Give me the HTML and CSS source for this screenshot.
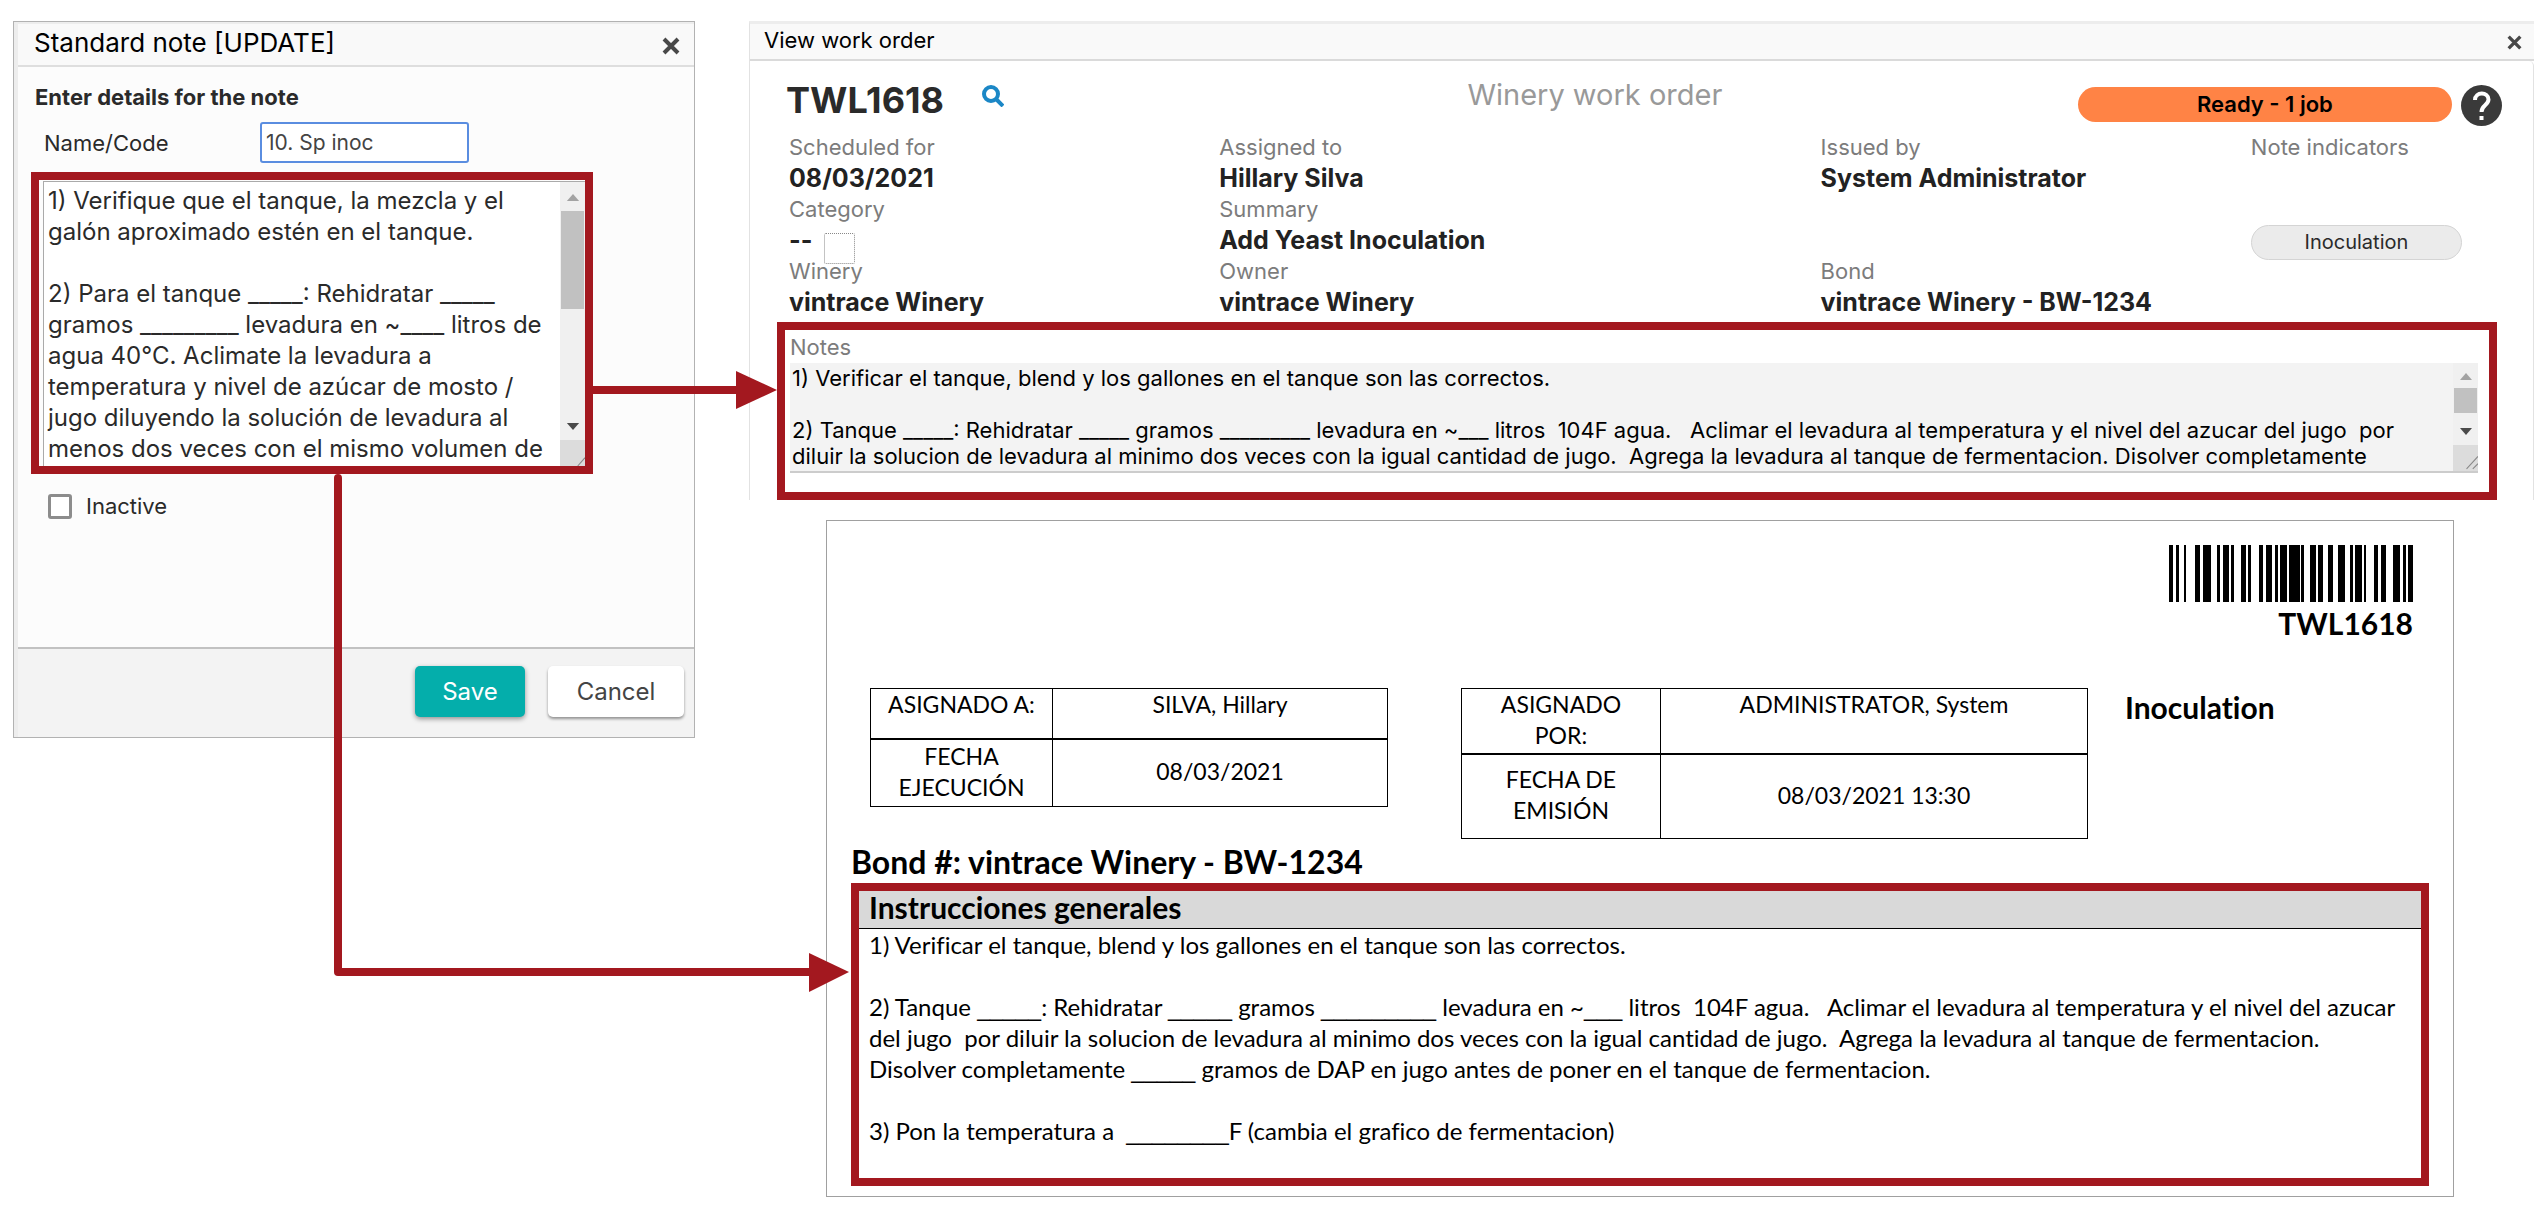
FILE: index.html
```html
<!DOCTYPE html>
<html lang="en">
<head>
<meta charset="utf-8">
<title>Standard note and work order</title>
<link rel="stylesheet" href="styles.css">
</head>
<body>
<main class="board">
  <section class="dialog" aria-labelledby="dialog-title">
    <header class="dialog-header">
      <h1 class="dialog-title" id="dialog-title">Standard note [UPDATE]</h1>
      <button class="close" type="button" aria-label="Close">
        <svg class="close-icon" viewBox="0 0 18 18"><path d="M2 2L16 16M16 2L2 16"/></svg>
      </button>
    </header>
    <form class="dialog-form">
      <h2 class="form-heading">Enter details for the note</h2>
      <div class="name-row">
        <label for="code">Name/Code</label>
        <input class="code-input" id="code" type="text" value="10. Sp inoc">
      </div>
      <div class="callout callout-source">
        <div class="note-field">
          <textarea class="note-text" aria-label="Note" wrap="off">1) Verifique que el tanque, la mezcla y el
galón aproximado estén en el tanque.

2) Para el tanque _____: Rehidratar _____
gramos _________ levadura en ~____ litros de
agua 40°C. Aclimate la levadura a
temperatura y nivel de azúcar de mosto /
jugo diluyendo la solución de levadura al
menos dos veces con el mismo volumen de</textarea>
          <div class="scroll scroll-tall" aria-hidden="true">
            <svg class="scroll-up" viewBox="0 0 14 8"><path d="M0 8L7 0L14 8Z"/></svg>
            <span class="scroll-thumb"></span>
            <svg class="scroll-down" viewBox="0 0 14 8"><path d="M0 0L14 0L7 8Z"/></svg>
            <svg class="grip" viewBox="0 0 24 25"><path d="M17 25L24 17"/></svg>
          </div>
        </div>
        <svg class="arrow arrow-right" viewBox="0 0 184 40" aria-hidden="true">
          <path class="arrow-line" d="M0 20H146"/><path class="arrow-head" d="M143 1L184 20L143 39Z"/>
        </svg>
        <svg class="arrow arrow-down" viewBox="0 0 515 520" aria-hidden="true">
          <path class="arrow-line" d="M4 4V498H480"/><path class="arrow-head" d="M475 479L515 498L475 518Z"/>
        </svg>
      </div>
      <label class="inactive-row"><input class="inactive-box" type="checkbox">Inactive</label>
    </form>
    <footer class="dialog-footer">
      <button class="button button-save" type="button">Save</button>
      <button class="button button-cancel" type="button">Cancel</button>
    </footer>
  </section>

  <div class="outputs">
    <section class="order" aria-labelledby="order-title">
      <header class="order-header">
        <h2 class="order-title" id="order-title">View work order</h2>
        <button class="close" type="button" aria-label="Close">
          <svg class="close-icon close-icon-small" viewBox="0 0 18 18"><path d="M2 2L16 16M16 2L2 16"/></svg>
        </button>
      </header>
      <div class="order-body">
        <div class="order-top">
          <div class="order-id">
            <h3 class="order-code">TWL1618</h3>
            <button class="search" type="button" aria-label="Search">
              <svg class="search-icon" viewBox="0 0 22 22"><circle cx="9" cy="9" r="7"/><path d="M14 14L21 21"/></svg>
            </button>
          </div>
          <p class="order-kind">Winery work order</p>
          <p class="status">Ready - 1 job</p>
          <button class="help" type="button" aria-label="Help">
            <svg class="help-icon" viewBox="0 0 41 41"><circle cx="20.500" cy="20.500" r="20.500"/><path d="M14 15C14 6.500 27.500 6.500 27.500 14.500C27.500 20 20.500 20 20.500 27"/><rect x="18.500" y="31" width="4" height="4"/></svg>
          </button>
        </div>
        <div class="fields">
          <div><p class="label">Scheduled for</p><p class="value">08/03/2021</p></div>
          <div><p class="label">Assigned to</p><p class="value">Hillary Silva</p></div>
          <div><p class="label">Issued by</p><p class="value">System Administrator</p></div>
          <div><p class="label">Note indicators</p></div>
          <div><p class="label">Category</p><p class="value category">-- <span class="swatch"></span></p></div>
          <div><p class="label">Summary</p><p class="value">Add Yeast Inoculation</p></div>
          <div></div>
          <div class="indicator-cell"><span class="indicator">Inoculation</span></div>
          <div><p class="label">Winery</p><p class="value">vintrace Winery</p></div>
          <div><p class="label">Owner</p><p class="value">vintrace Winery</p></div>
          <div><p class="label">Bond</p><p class="value">vintrace Winery - BW-1234</p></div>
        </div>
        <div class="callout callout-order">
          <label class="label notes-label" for="notes">Notes</label>
          <div class="order-notes">
            <textarea class="order-notes-text" id="notes" readonly wrap="off">1) Verificar el tanque, blend y los gallones en el tanque son las correctos.

2) Tanque _____: Rehidratar _____ gramos _________ levadura en ~___ litros  104F agua.   Aclimar el levadura al temperatura y el nivel del azucar del jugo  por
diluir la solucion de levadura al minimo dos veces con la igual cantidad de jugo.  Agrega la levadura al tanque de fermentacion. Disolver completamente</textarea>
            <div class="scroll" aria-hidden="true">
              <svg class="scroll-up" viewBox="0 0 14 8"><path d="M0 8L7 0L14 8Z"/></svg>
              <span class="scroll-thumb"></span>
              <svg class="scroll-down" viewBox="0 0 14 8"><path d="M0 0L14 0L7 8Z"/></svg>
              <svg class="grip" viewBox="0 0 24 25"><path d="M13 23L24 11M19 23L24 18"/></svg>
            </div>
          </div>
        </div>
      </div>
    </section>

    <article class="sheet">
      <header class="sheet-header">
        <svg class="barcode" viewBox="0 0 244 57" preserveAspectRatio="none" aria-hidden="true">
          <path d="M0 0h4v57h-4zM7 0h3v57h-3zM15 0h2v57h-2zM26 0h5v57h-5zM34 0h8v57h-8zM48 0h3v57h-3zM54 0h6v57h-6zM62 0h3v57h-3zM72 0h5v57h-5zM79 0h3v57h-3zM90 0h4v57h-4zM97 0h6v57h-6zM106 0h3v57h-3zM111 0h7v57h-7zM120 0h11v57h-11zM132 0h3v57h-3zM141 0h6v57h-6zM149 0h5v57h-5zM159 0h5v57h-5zM169 0h7v57h-7zM181 0h3v57h-3zM186 0h7v57h-7zM195 0h2v57h-2zM205 0h4v57h-4zM212 0h5v57h-5zM224 0h7v57h-7zM234 0h3v57h-3zM239 0h5v57h-5z"/>
        </svg>
        <p class="sheet-code">TWL1618</p>
      </header>
      <div class="sheet-meta">
        <table class="meta meta-first">
          <tr class="meta-top"><th class="meta-key" scope="row">ASIGNADO A:</th><td>SILVA, Hillary</td></tr>
          <tr class="meta-bottom"><th scope="row">FECHA<br>EJECUCIÓN</th><td>08/03/2021</td></tr>
        </table>
        <table class="meta meta-second">
          <tr class="meta-top"><th class="meta-key" scope="row">ASIGNADO<br>POR:</th><td>ADMINISTRATOR, System</td></tr>
          <tr class="meta-bottom"><th scope="row">FECHA DE<br>EMISIÓN</th><td>08/03/2021 13:30</td></tr>
        </table>
        <h3 class="sheet-tag">Inoculation</h3>
      </div>
      <h2 class="sheet-bond">Bond #: vintrace Winery - BW-1234</h2>
      <div class="callout callout-sheet">
        <h3 class="instructions-title">Instrucciones generales</h3>
        <div class="instructions">
          <p class="step">1) Verificar el tanque, blend y los gallones en el tanque son las correctos.</p>
          <div class="step">
            <p>2) Tanque <span class="blank">_____</span>: Rehidratar <span class="blank">_____</span> gramos <span class="blank">_________</span> levadura en ~<span class="blank">___</span> litros  104F agua.   Aclimar el levadura al temperatura y el nivel del azucar</p>
            <p>del jugo  por diluir la solucion de levadura al minimo dos veces con la igual cantidad de jugo.  Agrega la levadura al tanque de fermentacion.</p>
            <p>Disolver completamente <span class="blank">_____</span> gramos de DAP en jugo antes de poner en el tanque de fermentacion.</p>
          </div>
          <p class="step">3) Pon la temperatura a  <span class="blank">________</span>F (cambia el grafico de fermentacion)</p>
        </div>
      </div>
    </article>
  </div>
</main>
</body>
</html>
```

FILE: styles.css
```css
* { box-sizing: border-box; }

body {
  margin: 0;
  background: #fff;
  color: #2a2a2a;
  font-family: Inter, "Open Sans", sans-serif;
  font-size: 22px;
}

h1, h2, h3, p { margin: 0; }

button, input, textarea { font-family: inherit; }

button { padding: 0; border: 0; background: none; }

.board {
  display: flex;
  align-items: flex-start;
  gap: 54px;
  padding: 21px 11px 19px 13px;
}

.callout {
  position: relative;
  border: 8px solid #a3181f;
}

/* Note dialog */
.dialog {
  flex: 0 0 682px;
  border: 1px solid #b2b2b2;
  background: #fcfcfc;
  box-shadow: inset 4px 2px 0 #ededed;
}

.dialog-header {
  display: flex;
  align-items: center;
  justify-content: space-between;
  height: 43px;
  margin: 2px 0 0 4px;
  padding: 0 14px 3px 16px;
  border-bottom: 2px solid #dedede;
  background: #f9f9f9;
}

.dialog-title {
  color: #000;
  font-size: 26px;
  font-weight: 400;
  line-height: 30px;
}

.close { display: flex; padding-top: 6px; }

.close-icon {
  width: 18px;
  height: 18px;
  fill: none;
  stroke: #484848;
  stroke-width: 4;
}

.close-icon-small { width: 15px; height: 15px; }

.dialog-form { padding: 15px 0 126px 17px; }

.form-heading {
  padding-left: 4px;
  font-size: 22px;
  font-weight: 700;
  line-height: 30px;
}

.name-row {
  display: flex;
  align-items: center;
  height: 41px;
  margin: 10px 0 9px;
  padding-left: 13px;
}

.name-row label { width: 216px; }

.code-input {
  width: 209px;
  height: 41px;
  padding: 0 4px;
  border: 2px solid #5a8de0;
  border-radius: 3px;
  background: #fff;
  color: #444;
  font-size: 21px;
}

.callout-source { width: 562px; height: 302px; }

.note-field {
  display: flex;
  height: 285px;
  margin: 1px 0 0 4px;
  border-top: 1px solid #aaa;
  border-left: 1px solid #aaa;
}

.note-text {
  flex: 1;
  min-width: 0;
  padding: 3px 4px 0;
  border: 0;
  background: #fff;
  color: #2a2a2a;
  font-size: 24px;
  line-height: 31px;
  overflow: hidden;
  resize: none;
}

.scroll {
  display: flex;
  flex: 0 0 25px;
  flex-direction: column;
  align-items: center;
  background: #f0f0f0;
}

.scroll-up, .scroll-down { width: 12px; height: 7px; }
.scroll-up { margin: 10px 0 8px; fill: #a3a3a3; }
.scroll-down { margin: auto 0 10px; fill: #4a4a4a; }

.scroll-thumb {
  width: 23px;
  height: 25px;
  background: #c1c1c1;
}

.scroll-tall .scroll-up, .scroll-tall .scroll-down { width: 14px; }
.scroll-tall .scroll-up { margin: 12px 0 10px; }
.scroll-tall .scroll-thumb { height: 98px; }

.grip {
  width: 25px;
  height: 26px;
  background: #dcdcdc;
  fill: none;
  stroke: #888;
}

.arrow { position: absolute; overflow: visible; }

.arrow-right {
  top: 190px;
  left: calc(100% + 8px);
  width: 184px;
  height: 40px;
}

.arrow-down {
  top: calc(100% + 8px);
  left: 295px;
  width: 515px;
  height: 520px;
}

.arrow-line {
  fill: none;
  stroke: #a3181f;
  stroke-width: 8;
  stroke-linejoin: round;
}

.arrow-down .arrow-line { stroke-linecap: round; }
.arrow-head { fill: #a3181f; }

.inactive-row {
  display: flex;
  align-items: center;
  gap: 14px;
  margin-top: 17px;
  padding-left: 17px;
  line-height: 30px;
}

.inactive-box {
  appearance: none;
  width: 24px;
  height: 25px;
  margin: 0;
  border: 3px solid #8c8c8c;
  border-radius: 3px;
  background: #fff;
}

.dialog-footer {
  display: flex;
  justify-content: flex-end;
  gap: 23px;
  height: 90px;
  margin-left: 4px;
  padding: 17px 10px 0;
  border-top: 2px solid #c2c2c2;
  background: #f3f3f3;
}

.button {
  height: 51px;
  border-radius: 5px;
  font-size: 24px;
}

.button-save {
  width: 110px;
  background: #04aeab;
  box-shadow: 0 2px 5px #00000066;
  color: #fff;
}

.button-cancel {
  width: 136px;
  background: #fff;
  box-shadow: 0 2px 3px #00000066;
  color: #444;
}

/* Work order window */
.outputs { flex: 1; min-width: 0; }

.order {
  border-top: 3px solid #ededed;
  border-left: 1px solid #e2e2e2;
}

.order-header {
  display: flex;
  align-items: center;
  justify-content: space-between;
  height: 37px;
  padding: 0 12px 4px 14px;
  border-bottom: 2px solid #dadada;
  background: #f9f9f9;
}

.order-title {
  color: #000;
  font-size: 22px;
  font-weight: 400;
  line-height: 30px;
}

.order-body {
  border: 0 solid #e2e2e2;
  border-right-width: 1px;
  border-radius: 5px 5px 0 0;
}

.order-top {
  display: grid;
  grid-template-columns: 681fr 610fr 374fr 50px;
  align-items: start;
  height: 71px;
  padding: 14px 31px 0 36px;
}

.order-id { display: flex; gap: 38px; }

.order-code {
  font-size: 36px;
  font-weight: 700;
  line-height: 50px;
}

.search { height: 22px; margin-top: 10px; }

.search-icon {
  width: 22px;
  height: 22px;
  fill: none;
  stroke: #1b87c6;
  stroke-width: 4;
}

.order-kind {
  color: #999;
  font-size: 29px;
  line-height: 40px;
}

.status {
  height: 35px;
  margin-top: 12px;
  border-radius: 18px;
  background: #ff8345;
  color: #000;
  font-size: 22px;
  font-weight: 600;
  line-height: 35px;
  text-align: center;
}

.help { justify-self: end; margin-top: 10px; }

.help-icon {
  display: block;
  width: 41px;
  height: 41px;
  fill: #3a3a3a;
}

.help-icon path { fill: none; stroke: #fff; stroke-width: 4; }
.help-icon rect { fill: #fff; }

.fields {
  display: grid;
  grid-template-columns: 430fr 601fr 430fr 227fr;
  grid-auto-rows: 62px;
  margin-bottom: 4px;
  padding: 0 55px 0 39px;
  white-space: nowrap;
}

.label {
  color: #7c7c7c;
  font-size: 22px;
  line-height: 30px;
}

.value {
  color: #222;
  font-size: 25px;
  font-weight: 700;
  line-height: 32px;
}

.category { display: flex; gap: 12px; }

.swatch {
  width: 31px;
  height: 31px;
  margin-top: 9px;
  border: 1px dotted #888;
  border-radius: 2px;
}

.indicator-cell { padding: 31px 16px 0 0; }

.indicator {
  display: block;
  height: 35px;
  border: 1px solid #d4d4d4;
  border-radius: 18px;
  background: #ebebeb;
  font-size: 20px;
  line-height: 33px;
  text-align: center;
}

.callout-order {
  height: 178px;
  margin: 0 36px 0 27px;
  padding: 0 11px 0 5px;
}

.notes-label { display: block; padding: 2px 0 1px; }

.order-notes {
  display: flex;
  height: 110px;
  border-bottom: 2px solid #ccc;
  background: #f3f3f3;
}

.order-notes-text {
  flex: 1;
  min-width: 0;
  padding: 2px;
  border: 0;
  background: none;
  color: #000;
  font-size: 22px;
  line-height: 26px;
  overflow: hidden;
  resize: none;
}

/* Printed sheet */
.sheet {
  margin: 20px 80px 0 77px;
  padding: 24px 24px 10px;
  border: 1px solid #a0a0a0;
  color: #000;
  font-family: Lato, sans-serif;
  font-variant-ligatures: none;
}

.sheet-header {
  display: flex;
  flex-direction: column;
  align-items: flex-end;
  height: 143px;
  padding-right: 16px;
}

.barcode { width: 244px; height: 57px; }

.sheet-code {
  font-size: 30px;
  font-weight: 700;
  line-height: 42px;
}

.sheet-bond {
  font-size: 32px;
  font-weight: 700;
  line-height: 38px;
}

.sheet-meta {
  display: grid;
  grid-template-columns: 518fr 663fr 288fr;
  gap: 37px;
  align-items: start;
  height: 155px;
  padding: 0 16px 0 19px;
}

.meta {
  border-collapse: collapse;
  table-layout: fixed;
  width: 100%;
  font-size: 23px;
  line-height: 31px;
  text-align: center;
}

.meta-second { justify-self: end; width: 627px; max-width: 100%; }

.meta th, .meta td {
  padding: 0;
  border: 1px solid #000;
  font-weight: 400;
}

.meta-first .meta-key { width: 182px; }
.meta-second .meta-key { width: 199px; }
.meta-top > * { vertical-align: top; }
.meta .meta-bottom > * { padding-bottom: 2px; border-top-width: 2px; }
.meta-first .meta-top { height: 50px; }
.meta-first .meta-bottom { height: 68px; }
.meta-second .meta-top { height: 65px; }
.meta-second .meta-bottom { height: 85px; }

.sheet-tag {
  font-size: 30px;
  font-weight: 700;
  line-height: 38px;
}

.callout-sheet {
  height: 303px;
  margin-top: 2px;
}

.instructions-title {
  height: 38px;
  padding-left: 10px;
  border-bottom: 1px solid #000;
  background: #d9d9d9;
  font-size: 30px;
  font-weight: 700;
  line-height: 32px;
}

.instructions {
  display: grid;
  gap: 31px;
  padding: 0 10px;
  font-size: 24px;
  line-height: 31px;
}

.step { white-space: pre; }
div.step { white-space: normal; }
div.step p { white-space: pre; }

.blank {
  font-family: "Liberation Sans", sans-serif;
  font-size: 23px;
  line-height: 1;
}
```
